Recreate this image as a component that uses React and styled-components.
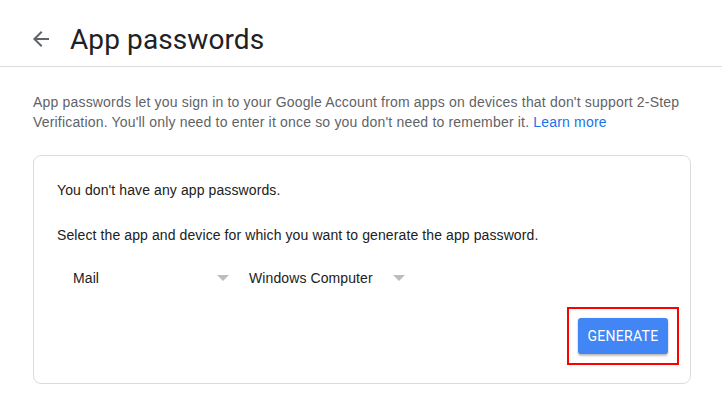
import React from "react";
import styled, { createGlobalStyle } from "styled-components";

const GlobalStyle = createGlobalStyle`
  body {
    margin: 0;
    background: #fff;
    font-family: "Liberation Sans", Arial, sans-serif;
  }
`;

const Page = styled.div`
  width: 722px;
  height: 411px;
  overflow: hidden;
  background: #fff;
`;

const Header = styled.header`
  display: flex;
  align-items: center;
  gap: 17px;
  height: 54px;
  padding: 12px 0 0 29px;
  border-bottom: 1px solid #dadce0;
`;

const BackButton = styled.button`
  display: flex;
  align-items: center;
  justify-content: center;
  width: 24px;
  height: 24px;
  padding: 0;
  border: 0;
  background: none;
  color: #5f6368;
  cursor: pointer;
`;

const Title = styled.h1`
  margin: 0;
  font-family: Roboto, "Open Sans", sans-serif;
  font-size: 28px;
  font-weight: 400;
  color: #202124;
  letter-spacing: 0.1px;
`;

const Content = styled.main`
  padding: 25px 31px 0 33px;
`;

const Intro = styled.p`
  margin: 0;
  font-size: 14px;
  line-height: 20px;
  letter-spacing: 0.18px;
  color: #5f6368;
`;

const LearnMore = styled.a`
  color: #1a73e8;
  text-decoration: none;
`;

const Card = styled.section`
  margin-top: 23px;
  padding: 24px 11px 18px 23px;
  border: 1px solid #dadce0;
  border-radius: 8px;
`;

const CardText = styled.p`
  margin: 0 0 ${(p) => p.$gap || 0}px;
  font-size: 14px;
  line-height: 20px;
  letter-spacing: 0.1px;
  color: #212121;
`;

const SelectRow = styled.div`
  display: flex;
  margin-top: 15px;
`;

const Select = styled.div`
  display: flex;
  align-items: center;
  justify-content: space-between;
  width: 176px;
  height: 36px;
  padding: 0 4px 0 16px;
  box-sizing: border-box;
  font-size: 14px;
  letter-spacing: 0.1px;
  color: #212121;
  cursor: pointer;
`;

const Caret = styled.span`
  width: 0;
  height: 0;
  border-left: 6px solid transparent;
  border-right: 6px solid transparent;
  border-top: 6px solid #bdbdbd;
`;

const Actions = styled.div`
  display: flex;
  justify-content: flex-end;
  margin-top: 11px;
`;

const Highlight = styled.div`
  padding: 9px;
  border: 2px solid #f00;
`;

const GenerateButton = styled.button`
  width: 90px;
  height: 36px;
  padding: 0;
  border: 0;
  border-radius: 3px;
  background: #4285f4;
  color: #fff;
  font-family: Roboto, sans-serif;
  font-size: 14px;
  letter-spacing: 0.3px;
  box-shadow: 0 2px 2px rgba(0, 0, 0, 0.24), 0 0 2px rgba(0, 0, 0, 0.12);
  cursor: pointer;
`;

const ArrowBack = () => (
  <svg width="24" height="24" viewBox="0 0 24 24" fill="currentColor">
    <path d="M20 11H7.83l5.59-5.59L12 4l-8 8 8 8 1.41-1.41L7.83 13H20v-2z" />
  </svg>
);

export default function App() {
  return (
    <Page>
      <GlobalStyle />
      <Header>
        <BackButton aria-label="Back">
          <ArrowBack />
        </BackButton>
        <Title>App passwords</Title>
      </Header>
      <Content>
        <Intro>
          App passwords let you sign in to your Google Account from apps on
          devices that don't support 2-Step Verification. You'll only need to
          enter it once so you don't need to remember it.{" "}
          <LearnMore href="#">Learn more</LearnMore>
        </Intro>
        <Card>
          <CardText $gap={25}>You don't have any app passwords.</CardText>
          <CardText>
            Select the app and device for which you want to generate the app
            password.
          </CardText>
          <SelectRow>
            <Select>
              Mail
              <Caret />
            </Select>
            <Select>
              Windows Computer
              <Caret />
            </Select>
          </SelectRow>
          <Actions>
            <Highlight>
              <GenerateButton>GENERATE</GenerateButton>
            </Highlight>
          </Actions>
        </Card>
      </Content>
    </Page>
  );
}
